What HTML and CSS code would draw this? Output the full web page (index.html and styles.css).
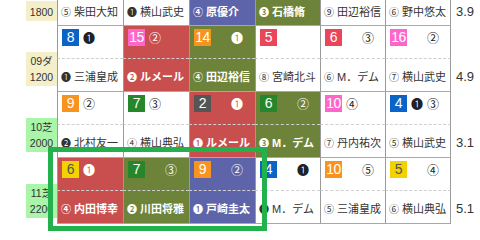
FILE: index.html
```html
<!DOCTYPE html>
<html lang="ja">
<head>
<meta charset="utf-8">
<title>騎手一覧</title>
<link rel="stylesheet" href="styles.css">
</head>
<body>
<div class="board">
  <div class="race top">
    <div class="label dirt">1800</div>
    <div class="c j"><span class="jm">⑤</span> 柴田大知</div>
    <div class="c j"><span class="jm">❶</span> 横山武史</div>
    <div class="c j pur"><span class="jm">④</span> 原優介</div>
    <div class="c j grn"><span class="jm">❸</span> 石橋脩</div>
    <div class="c j"><span class="jm">⑨</span> 田辺裕信</div>
    <div class="c j last"><span class="jm">⑥</span> 野中悠太</div>
    <div class="odds">3.9</div>
  </div>

  <div class="race">
    <div class="label dirt">09ダ<br>1200</div>
    <div class="c b"><span class="n blue">8</span><span class="m m1">❶</span></div>
    <div class="c b red"><span class="n pink">15</span><span class="m m1">②</span></div>
    <div class="c b grn"><span class="n orange">14</span><span class="m m1"></span><span class="m">❶</span></div>
    <div class="c b"><span class="n rose">5</span></div>
    <div class="c b"><span class="n rose">6</span><span class="m m1"></span><span class="m">③</span></div>
    <div class="c b last"><span class="n pink">16</span><span class="m m1"></span><span class="m">②</span></div>
    <div class="c j"><span class="jm">❶</span> 三浦皇成</div>
    <div class="c j red"><span class="jm">❷</span> ルメール</div>
    <div class="c j grn"><span class="jm">④</span> 田辺裕信</div>
    <div class="c j"><span class="jm">⑧</span> 宮崎北斗</div>
    <div class="c j"><span class="jm">⑥</span> M．デム</div>
    <div class="c j last"><span class="jm">⑦</span> 横山武史</div>
    <div class="odds">4.9</div>
  </div>

  <div class="race">
    <div class="label turf">10芝<br>2000</div>
    <div class="c b"><span class="n orange">9</span><span class="m m1">②</span></div>
    <div class="c b"><span class="n green">7</span><span class="m m1">③</span></div>
    <div class="c b red"><span class="n gray">2</span><span class="m m1"></span><span class="m">❶</span></div>
    <div class="c b grn"><span class="n green">6</span><span class="m m1"></span><span class="m">②</span></div>
    <div class="c b"><span class="n pink">10</span><span class="m m1">④</span></div>
    <div class="c b last"><span class="n blue">4</span><span class="m m1">❶</span><span class="m">③</span></div>
    <div class="c j"><span class="jm">❷</span> 北村友一</div>
    <div class="c j"><span class="jm">④</span> 横山典弘</div>
    <div class="c j red"><span class="jm">❶</span> ルメール</div>
    <div class="c j grn"><span class="jm">❸</span> M．デム</div>
    <div class="c j"><span class="jm">⑦</span> 丹内祐次</div>
    <div class="c j last"><span class="jm">⑤</span> 横山武史</div>
    <div class="odds">3.1</div>
  </div>

  <div class="race">
    <div class="label turf">11芝<br>2200</div>
    <div class="c b red"><span class="n yellow">6</span><span class="m m1">❶</span></div>
    <div class="c b grn"><span class="n green">7</span><span class="m m1"></span><span class="m">③</span></div>
    <div class="c b pur"><span class="n orange">9</span><span class="m m1"></span><span class="m">②</span></div>
    <div class="c b"><span class="n blue">4</span><span class="m m1"></span><span class="m">❶</span></div>
    <div class="c b"><span class="n orange">10</span><span class="m m1"></span><span class="m">⑤</span></div>
    <div class="c b last"><span class="n yellow">5</span><span class="m m1"></span><span class="m">④</span></div>
    <div class="c j red"><span class="jm">④</span> 内田博幸</div>
    <div class="c j grn"><span class="jm">❷</span> 川田将雅</div>
    <div class="c j pur"><span class="jm">❶</span> 戸崎圭太</div>
    <div class="c j"><span class="jm">❸</span> M．デム</div>
    <div class="c j"><span class="jm">⑤</span> 三浦皇成</div>
    <div class="c j last"><span class="jm">⑥</span> 横山典弘</div>
    <div class="odds">5.1</div>
  </div>

  <div class="frame"></div>
</div>
</body>
</html>
```

FILE: styles.css
```css
* { box-sizing: border-box; }

body {
  margin: 0;
  background: #fff;
  color: #333;
  font-family: "Liberation Sans", "Noto Sans CJK JP", sans-serif;
}

.board {
  position: relative;
  width: 480px;
  height: 240px;
  overflow: hidden;
}

.race {
  display: grid;
  grid-template-columns: 57px 66px 66px 66px 65px 65px 66px 1fr;
  grid-template-rows: 33px 33px;
}

.race.top {
  grid-template-rows: 26px;
}

.label {
  grid-row: 1 / 3;
  grid-column: 1;
  align-self: end;
  width: 31px;
  margin: 0 0 6px 26px;
  padding: 1px 0;
  font-size: 10.5px;
  line-height: 16px;
  text-align: center;
  color: #333;
}

.top .label {
  grid-row: 1;
  margin-bottom: 5px;
  padding: 3px 0 1px;
}

.dirt { background: #f5efc9; }
.turf { background: #aaf5aa; }

.c { border-left: 1px solid #9a9a9a; }
.c.last { border-right: 1px solid #9a9a9a; }

.b {
  grid-row: 1;
  display: flex;
  align-items: flex-start;
  padding: 3px 0 0 4px;
  border-bottom: 1px dashed #cfcfcf;
}

.j {
  grid-row: 2;
  padding: 10px 0 0 3px;
  font-size: 11px;
  line-height: 16px;
  white-space: nowrap;
  overflow: hidden;
  border-bottom: 1px solid #a8a8a8;
}

.top .j {
  grid-row: 1;
  padding-top: 4px;
}

.jm {
  font-family: "Noto Sans CJK JP", sans-serif;
  font-size: 10px;
}

.odds {
  grid-row: 2;
  grid-column: 8;
  padding: 10px 0 0 5px;
  font-size: 13px;
  line-height: 16px;
}

.top .odds {
  grid-row: 1;
  padding-top: 4px;
}

.red { background: #c94f4f; color: #fff; }
.grn { background: #6c8339; color: #fff; }
.pur { background: #5d64a9; color: #fff; }
.j.red, .j.grn, .j.pur { font-weight: bold; }

.n {
  width: 17px;
  height: 17px;
  line-height: 17px;
  text-align: center;
  font-size: 14px;
  color: #fff;
  letter-spacing: -0.5px;
}

.blue { background: #0a64c8; }
.pink { background: #ff66cc; }
.orange { background: #f7931e; }
.rose { background: #ea4559; }
.gray { background: #555; }
.green { background: #26862c; }
.yellow { background: #f2d200; color: #555; }

.m {
  width: 16px;
  height: 17px;
  line-height: 17px;
  text-align: center;
  font-family: "Noto Sans CJK JP", sans-serif;
  font-size: 12px;
  color: #222;
}

.m1 { margin-left: 2px; }

.red .m, .grn .m, .pur .m { color: #fff; }

.frame {
  position: absolute;
  left: 48px;
  top: 147px;
  width: 219px;
  height: 84px;
  border: 5px solid #22b14c;
}
```
